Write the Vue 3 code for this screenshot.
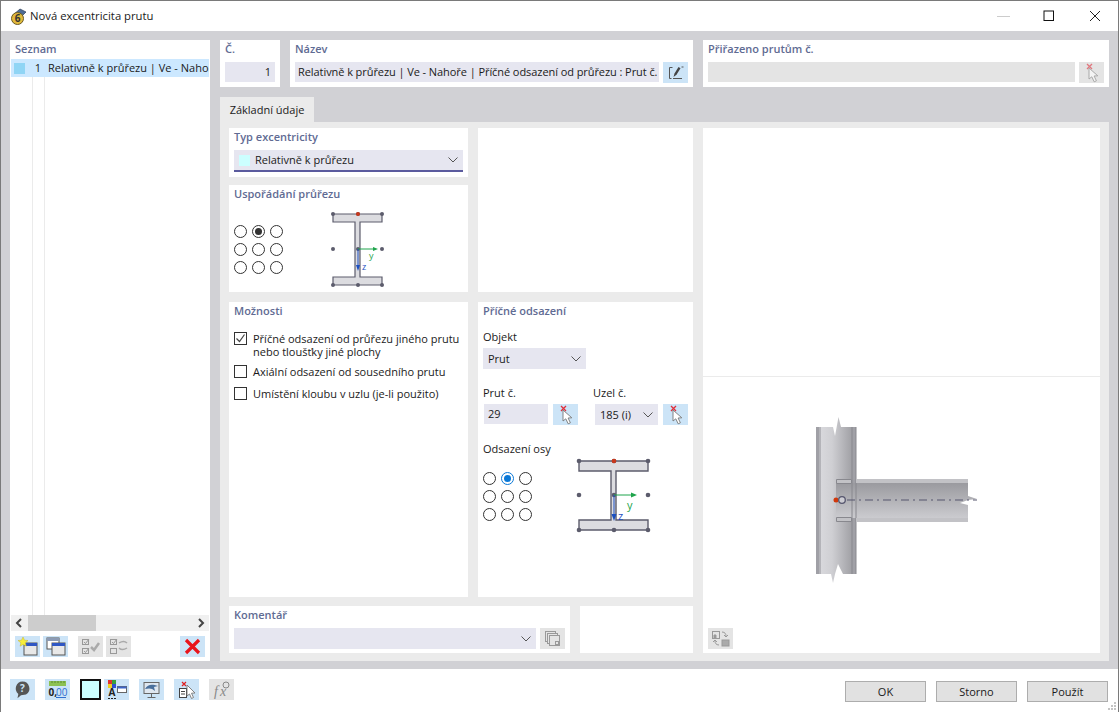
<script setup>
const radios = [0, 1, 2, 3, 4, 5, 6, 7, 8]
const smallDots = [[5, 4], [30, 4], [54, 4], [5, 39], [30, 39], [54, 39], [5, 75], [30, 75], [54, 75]]
const largeDots = [[4, 4], [39, 4], [73, 4], [4, 38], [39, 38], [73, 38], [4, 73], [39, 73], [73, 73]]
const gripDots = [[8, 2], [5, 5], [8, 5], [2, 8], [5, 8], [8, 8]]
</script>

<template>
  <div class="window">
    <svg class="defs" width="0" height="0">
      <defs>
        <symbol id="pick" viewBox="0 0 25 21">
          <path d="M8 2l5 5M13 2L8 7" stroke="currentColor" stroke-width="1.300" fill="none" class="pick-x" />
          <path d="M10 6v11l2.800-2.200 2.400 5 2.200-1-2.300-4.800 3.700-.2z" fill="#fff" stroke="#777" stroke-width=".9" />
        </symbol>
      </defs>
    </svg>

    <header class="titlebar">
      <svg class="app-icon" width="20" height="20" viewBox="0 0 20 20">
        <path d="M5 9l7-6 6 3-6 6z" fill="#4d6c96" stroke="#2c3c58" stroke-width=".7" />
        <circle cx="9.500" cy="12.500" r="6" fill="#e2b93b" stroke="#6a5a24" />
        <text x="9.500" y="16" text-anchor="middle" class="app-six">6</text>
      </svg>
      <span class="title">Nová excentricita prutu</span>
      <div class="win-controls">
        <svg width="14" height="14" viewBox="0 0 14 14"><path d="M1 7.500h13" stroke="#ccc" fill="none" /></svg>
        <svg width="14" height="14" viewBox="0 0 14 14"><rect x="2" y="2" width="9.500" height="9.500" fill="none" stroke="#111" /></svg>
        <svg width="14" height="14" viewBox="0 0 14 14"><path d="M2 2l10 10M12 2L2 12" stroke="#222" fill="none" /></svg>
      </div>
    </header>

    <main class="body">
      <aside class="sidebar">
        <h3 class="heading">Seznam</h3>
        <div class="list">
          <div class="row">
            <span class="row-swatch"></span>
            <span class="row-num">1</span>
            <span class="row-text">Relativně k průřezu | Ve - Nahoře</span>
          </div>
        </div>
        <div class="scrollbar">
          <svg width="17" height="16" viewBox="0 0 17 16"><path d="M10 4L6 8l4 4" fill="none" stroke="#444" stroke-width="2" /></svg>
          <div class="track"><div class="thumb"></div></div>
          <svg width="17" height="16" viewBox="0 0 17 16"><path d="M7 4l4 4-4 4" fill="none" stroke="#444" stroke-width="2" /></svg>
        </div>
        <div class="side-tools">
          <button class="btn-icon blue">
            <svg width="25" height="21" viewBox="0 0 25 21">
              <rect x="9" y="7" width="13" height="12" fill="#e8e8e8" stroke="#555" />
              <rect x="9" y="7" width="13" height="3" fill="#2f57c4" />
              <path d="M8 1l1.500 3.200 3.500.3-2.600 2.300.8 3.400L8 8.400l-2.900 1.800.8-3.400L3 4.500l3.500-.3z" fill="#f7ee3a" stroke="#c9b52a" stroke-width=".5" />
            </svg>
          </button>
          <button class="btn-icon blue">
            <svg width="25" height="21" viewBox="0 0 25 21">
              <rect x="4" y="2" width="12" height="11" fill="#fff" stroke="#555" />
              <rect x="4" y="2" width="12" height="3" fill="#8c9bb5" />
              <rect x="9" y="7" width="13" height="12" fill="#e8e8e8" stroke="#555" />
              <rect x="9" y="7" width="13" height="3" fill="#2f57c4" />
            </svg>
          </button>
          <button class="btn-icon grey gap-left">
            <svg width="25" height="21" viewBox="0 0 25 21" fill="none" stroke="#999">
              <rect x="4.500" y="3.500" width="6" height="5" /><rect x="4.500" y="12.500" width="6" height="5" />
              <path d="M6 6l1.500 1.500L11 3M6 15l1.500 1.500L11 12" />
              <path d="M13 11l3 3 5-7" stroke-width="2.500" stroke="#aaa" />
            </svg>
          </button>
          <button class="btn-icon grey">
            <svg width="25" height="21" viewBox="0 0 25 21" fill="none" stroke="#999">
              <rect x="4.500" y="3.500" width="6" height="5" /><rect x="4.500" y="12.500" width="6" height="5" />
              <path d="M6 6l1.500 1.500L11 3" />
              <path d="M13 7c3-2 6-2 8 0M21 12c-3 2-6 2-8 0" stroke-width="1.500" stroke="#aaa" />
            </svg>
          </button>
          <button class="btn-icon blue push-right">
            <svg width="25" height="21" viewBox="0 0 25 21"><path d="M6 4l13 13M19 4L6 17" stroke="#e8141c" stroke-width="3.200" fill="none" /></svg>
          </button>
        </div>
      </aside>

      <section class="content">
        <div class="top-row">
          <div class="card card-no">
            <h3 class="heading">Č.</h3>
            <div class="input right">1</div>
          </div>
          <div class="card card-name">
            <h3 class="heading">Název</h3>
            <div class="field-row">
              <div class="input grow clip name-input">Relativně k průřezu | Ve - Nahoře | Příčné odsazení od průřezu : Prut č.</div>
              <button class="btn-icon blue">
                <svg width="25" height="21" viewBox="0 0 25 21" fill="none" stroke="#555">
                  <path d="M9.500 5.500H6.500v11h2M10 16.500h9" />
                  <path d="M10.500 15l1-3.500 4-6.500 2 1.200-4 6.500z" fill="#444" stroke="none" />
                  <path d="M18.500 5h2" />
                </svg>
              </button>
            </div>
          </div>
          <div class="card card-assigned">
            <h3 class="heading">Přiřazeno prutům č.</h3>
            <div class="field-row">
              <div class="input grow disabled"></div>
              <button class="btn-icon grey off-pick"><svg width="25" height="21"><use href="#pick" /></svg></button>
            </div>
          </div>
        </div>

        <div class="tabs"><div class="tab">Základní údaje</div></div>

        <div class="tab-body">
          <div class="form-area">
            <div class="form-top">
              <div class="col">
                <div class="panel panel-type">
                  <h3 class="heading">Typ excentricity</h3>
                  <div class="select underlined">
                    <span class="type-swatch"></span>
                    <span class="grow">Relativně k průřezu</span>
                    <svg class="chev" width="10" height="6" viewBox="0 0 10 6"><path d="M.5.500L5 5 9.500.500" fill="none" stroke="#555" /></svg>
                  </div>
                </div>
                <div class="panel panel-arrange">
                  <h3 class="heading">Uspořádání průřezu</h3>
                  <div class="arrange">
                    <div class="radios">
                      <span v-for="r in radios" :key="r" class="radio" :class="{ 'on-dark': r === 1 }"></span>
                    </div>
                    <svg class="section-small" width="60" height="80" viewBox="0 0 60 80">
                      <path d="M5 4h49v8H32v55h22v8H5v-8h22V12H5z" fill="#dcdce0" stroke="#5c5c6c" stroke-width="1.200" />
                      <circle v-for="(d, i) in smallDots" :key="i" :cx="d[0]" :cy="d[1]" r="2" fill="#5c5c6c" />
                      <circle cx="30" cy="4" r="2" fill="#c8381c" />
                      <path d="M30 39h16" stroke="#1fa44c" />
                      <path d="M50 39l-5-2v4z" fill="#1fa44c" />
                      <path d="M30 39v18" stroke="#1c4fc0" />
                      <path d="M30 61l-2-6h4z" fill="#1c4fc0" />
                      <text x="41" y="49" class="axis-y">y</text>
                      <text x="34" y="60" class="axis-z">z</text>
                    </svg>
                  </div>
                </div>
              </div>
              <div class="panel col-blank"></div>
            </div>

            <div class="form-mid">
              <div class="panel panel-options">
                <h3 class="heading">Možnosti</h3>
                <label class="check first">
                  <span class="box">
                    <svg width="11" height="11" viewBox="0 0 11 11"><path d="M1.500 5.500l3 3 5-7" fill="none" stroke="#444" stroke-width="1.200" /></svg>
                  </span>
                  <span>Příčné odsazení od průřezu jiného prutu<br />nebo tloušťky jiné plochy</span>
                </label>
                <label class="check"><span class="box"></span><span>Axiální odsazení od sousedního prutu</span></label>
                <label class="check"><span class="box"></span><span>Umístění kloubu v uzlu (je-li použito)</span></label>
              </div>
              <div class="panel panel-offset">
                <h3 class="heading">Příčné odsazení</h3>
                <div class="label label-object">Objekt</div>
                <div class="select object-select">
                  <span class="grow">Prut</span>
                  <svg class="chev" width="10" height="6" viewBox="0 0 10 6"><path d="M.5.500L5 5 9.500.500" fill="none" stroke="#555" /></svg>
                </div>
                <div class="pair">
                  <div class="pair-left">
                    <div class="label">Prut č.</div>
                    <div class="field-row tight">
                      <div class="input member-input">29</div>
                      <button class="btn-icon blue on-pick"><svg width="25" height="21"><use href="#pick" /></svg></button>
                    </div>
                  </div>
                  <div class="pair-right">
                    <div class="label">Uzel č.</div>
                    <div class="field-row tight">
                      <div class="select node-select">
                        <span class="grow">185 (i)</span>
                        <svg class="chev" width="10" height="6" viewBox="0 0 10 6"><path d="M.5.500L5 5 9.500.500" fill="none" stroke="#555" /></svg>
                      </div>
                      <button class="btn-icon blue on-pick"><svg width="25" height="21"><use href="#pick" /></svg></button>
                    </div>
                  </div>
                </div>
                <div class="label label-axis">Odsazení osy</div>
                <div class="axis-row">
                  <div class="radios">
                    <span v-for="r in radios" :key="r" class="radio" :class="{ 'on-blue': r === 1 }"></span>
                  </div>
                  <svg class="section-large" width="77" height="77" viewBox="0 0 77 77">
                    <path d="M4 4h69v10H41v49h32v10H4V63h32V14H4z" fill="#dcdce0" stroke="#5c5c6c" stroke-width="1.400" />
                    <circle v-for="(d, i) in largeDots" :key="i" :cx="d[0]" :cy="d[1]" r="2.300" fill="#5c5c6c" />
                    <circle cx="39" cy="4" r="2.300" fill="#c8381c" />
                    <path d="M39 38h19" stroke="#1fa44c" />
                    <path d="M62 38l-6-2.500v5z" fill="#1fa44c" />
                    <path d="M39 38v20" stroke="#1c4fc0" />
                    <path d="M39 64l-2.500-7h5z" fill="#1c4fc0" />
                    <text x="52" y="52" class="axis-y big">y</text>
                    <text x="43" y="63" class="axis-z big">z</text>
                  </svg>
                </div>
              </div>
            </div>

            <div class="form-bottom">
              <div class="panel panel-comment">
                <h3 class="heading">Komentář</h3>
                <div class="field-row">
                  <div class="select grow">
                    <span class="grow"></span>
                    <svg class="chev" width="10" height="6" viewBox="0 0 10 6"><path d="M.5.500L5 5 9.500.500" fill="none" stroke="#555" /></svg>
                  </div>
                  <button class="btn-icon grey">
                    <svg width="25" height="21" viewBox="0 0 25 21" fill="none" stroke="#999">
                      <rect x="5.500" y="3.500" width="10" height="10" /><rect x="7.500" y="5.500" width="10" height="10" fill="#e4e4e4" />
                      <rect x="9.500" y="7.500" width="10" height="10" fill="#e4e4e4" /><rect x="15.500" y="13.500" width="3" height="3" />
                    </svg>
                  </button>
                </div>
              </div>
              <div class="panel panel-spare"></div>
            </div>
          </div>

          <div class="preview">
            <div class="preview-top"></div>
            <div class="preview-bottom">
              <svg class="model" width="397" height="276" viewBox="703 377 397 276">
                <defs>
                  <linearGradient id="colShade" x1="0" x2="1" y1="0" y2="0">
                    <stop offset="0" stop-color="#dcdce0" />
                    <stop offset=".4" stop-color="#cfcfd3" />
                    <stop offset="1" stop-color="#97979c" />
                  </linearGradient>
                  <linearGradient id="beamShade" x1="0" x2="0" y1="0" y2="1">
                    <stop offset="0" stop-color="#9a9a9f" />
                    <stop offset="1" stop-color="#cbcbcf" />
                  </linearGradient>
                </defs>
                <path d="M816 427h17l2 9 3.500-19 2.500 10h15v147h-13l-5-10-3 10-2 9-2-9h-15z" fill="url(#colShade)" />
                <path d="M816 427h3v147h-3zM852 427h4v147h-4z" fill="#a0a0a6" />
                <path d="M820 427v147" stroke="#8f8f95" fill="none" />
                <path d="M836 483h132v13l9 3-9 1-8 3 8 2v13H836z" fill="url(#beamShade)" />
                <path d="M852 427v147M856 427v147" stroke="#88888e" fill="none" />
                <path d="M856 479h112v4H856zM856 518h112v4H856z" fill="#c2c2c6" />
                <path d="M836.500 479.500h15v4h-15zM836.500 517.500h15v4h-15z" fill="#c2c2c6" stroke="#88888e" />
                <path d="M847 500h130" stroke="#56566e" stroke-width="1.200" stroke-dasharray="8 4 2 4" fill="none" />
                <circle cx="836" cy="500" r="2.500" fill="#d0380c" />
                <circle cx="842" cy="500" r="3.300" fill="#ccccd2" stroke="#56566e" stroke-width="1.300" />
              </svg>
              <button class="btn-icon grey view-btn">
                <svg width="25" height="21" viewBox="0 0 25 21" fill="none" stroke="#999">
                  <rect x="4.500" y="3.500" width="7" height="7" /><path d="M6 10V7h2v3z" fill="#999" />
                  <path d="M14 4c3 0 4 2 4 4M16 7l2 2 2-2M11 17c-3 0-4-2-4-4M5 14l2-2 2 2" />
                  <rect x="14" y="12" width="7" height="6" fill="#aaa" />
                </svg>
              </button>
            </div>
          </div>
        </div>
      </section>
    </main>

    <footer class="footer">
      <div class="foot-icons">
        <button class="btn-icon blue">
          <svg width="25" height="21" viewBox="0 0 25 21">
            <path d="M12.500 2.500a7 7 0 0 1 3.500 13l-5 .8-3.500 3 .8-4.400a7 7 0 0 1 4.200-12.400z" fill="#555" />
            <text x="12.500" y="13" text-anchor="middle" class="help-mark">?</text>
          </svg>
        </button>
        <button class="btn-icon blue">
          <svg width="25" height="21" viewBox="0 0 25 21">
            <rect x="4" y="2" width="17" height="5" fill="#8cc152" />
            <path d="M7 2v2M10 2v2M13 2v2M16 2v2M19 2v2" stroke="#5c8a30" />
            <text x="3.500" y="17" class="num-black">0,</text>
            <text x="11" y="17" class="num-blue">00</text>
            <path d="M11 18.500h10" stroke="#2f6fd0" />
          </svg>
        </button>
        <span class="color-box"></span>
        <button class="btn-icon blue tight-left">
          <svg width="25" height="21" viewBox="0 0 25 21">
            <rect x="4" y="1" width="4" height="4" fill="#e03030" /><rect x="8" y="1" width="4" height="4" fill="#3aa03a" />
            <rect x="4" y="5" width="4" height="4" fill="#f0d020" /><rect x="8" y="5" width="4" height="4" fill="#3050d0" />
            <text x="8" y="17" text-anchor="middle" class="num-a">A</text>
            <path d="M4 19.500h8" stroke="#222" stroke-dasharray="2 1" />
            <rect x="13.500" y="7.500" width="9" height="6" fill="#fff" stroke="#666" />
            <rect x="13.500" y="7.500" width="9" height="2" fill="#3b64c8" />
          </svg>
        </button>
        <button class="btn-icon blue">
          <svg width="25" height="21" viewBox="0 0 25 21">
            <rect x="5" y="3.500" width="15" height="11" fill="#dfe7f0" stroke="#666" />
            <path d="M6 10c3-5 7-5 13-3l-4 1 1 4c-3-3-6-3-10-2z" fill="#4a6f9c" />
            <path d="M12.500 15v3M8.500 18.500h8" stroke="#666" />
          </svg>
        </button>
        <button class="btn-icon blue">
          <svg width="25" height="21" viewBox="0 0 25 21">
            <path d="M8 3l4 4M12 3L8 7" stroke="#e02020" stroke-width="1.200" fill="none" />
            <rect x="5.500" y="9.500" width="7" height="9" fill="#fff" stroke="#444" />
            <path d="M7 12.500h4M7 15h4" stroke="#444" />
            <path d="M13 6v11l2.500-2 2 4.500 2-1-2-4.300 3.500-.2z" fill="#fff" stroke="#777" stroke-width=".9" />
          </svg>
        </button>
        <button class="btn-icon grey">
          <svg width="25" height="21" viewBox="0 0 25 21">
            <text x="5" y="17" class="fx">f</text>
            <text x="11" y="17" class="fx">x</text>
            <circle cx="17" cy="6" r="3" fill="none" stroke="#888" />
          </svg>
        </button>
      </div>
      <div class="foot-buttons">
        <button class="btn">OK</button>
        <button class="btn">Storno</button>
        <button class="btn">Použít</button>
      </div>
      <svg class="grip" width="10" height="10" viewBox="0 0 10 10">
        <rect v-for="(d, i) in gripDots" :key="i" :x="d[0] - 1" :y="d[1] - 1" width="2" height="2" fill="#c4c4c4" />
      </svg>
    </footer>
  </div>
</template>

<style scoped>
.window {
  width: 1119px;
  height: 712px;
  box-sizing: border-box;
  border: 1px solid #7a7a7a;
  border-bottom: 0;
  display: flex;
  flex-direction: column;
  background: #fff;
  color: #1a1a1a;
  font: 11px/14px "Open Sans", "Noto Sans", sans-serif;
  overflow: hidden;
}
.defs { display: block; }
.pick-x { color: #e0303c; }
.off-pick .pick-x { color: #aaa; }
.off-pick svg { opacity: 0.6; }

.titlebar {
  height: 30px;
  display: flex;
  align-items: center;
  padding-left: 7px;
  flex: none;
}
.app-icon { margin-right: 2px; }
.app-six { font: bold 10px "Open Sans", sans-serif; fill: #333; }
.title { font-size: 11.3px; }
.win-controls {
  margin-left: auto;
  display: flex;
  gap: 32px;
  padding-right: 16px;
}

.body {
  flex: 1;
  min-height: 0;
  background: #d1d1d5;
  display: flex;
  gap: 10px;
  padding: 9px 9px 8px;
}
.heading {
  margin: 0;
  font-size: 11px;
  line-height: 14px;
  font-weight: 600;
  color: #5f6b93;
}

.sidebar {
  width: 200px;
  background: #fff;
  display: flex;
  flex-direction: column;
  flex: none;
}
.sidebar > .heading { padding: 2px 5px 3px; }
.list {
  flex: 1;
  margin: 0 1px;
  background:
    linear-gradient(#ebebeb, #ebebeb) 21px 0 / 1px 100% no-repeat,
    linear-gradient(#ebebeb, #ebebeb) 33px 0 / 1px 100% no-repeat;
}
.row {
  height: 18px;
  display: flex;
  align-items: center;
  background: #cce8ff;
  overflow: hidden;
}
.row-swatch {
  width: 11px;
  height: 11px;
  margin-left: 3px;
  background: #90d5f5;
  flex: none;
}
.row-num {
  width: 16px;
  text-align: right;
  flex: none;
}
.row-text {
  margin-left: 7px;
  white-space: nowrap;
}
.scrollbar {
  height: 16px;
  margin: 0 1px;
  background: #f0f0f0;
  display: flex;
  align-items: center;
  flex: none;
}
.track { flex: 1; height: 100%; }
.thumb { width: 68px; height: 100%; background: #cdcdcd; }
.side-tools {
  display: flex;
  gap: 3px;
  padding: 5px 5px 4px;
  flex: none;
}
.gap-left { margin-left: 7px; }
.push-right { margin-left: auto; }

.btn-icon {
  width: 25px;
  height: 21px;
  padding: 0;
  border: 0;
  flex: none;
  display: block;
}
.btn-icon svg { display: block; }
.blue { background: #cce4f7; }
.grey { background: #e4e4e4; }

.content {
  flex: 1;
  min-width: 0;
  display: flex;
  flex-direction: column;
}
.top-row {
  display: flex;
  gap: 10px;
  height: 47px;
  flex: none;
}
.card {
  background: #fff;
  padding: 2px 5px 0;
  box-sizing: border-box;
}
.card .heading { margin-bottom: 6px; }
.card-no { width: 60px; }
.card-name { width: 403px; }
.card-assigned { flex: 1; }
.input {
  height: 20px;
  line-height: 20px;
  background: #e6e6f0;
  padding: 0 4px;
  box-sizing: border-box;
}
.right { text-align: right; }
.disabled { background: #e4e4e4; }
.clip { overflow: hidden; white-space: nowrap; }
.name-input { padding-left: 3px; letter-spacing: -0.07px; }
.field-row {
  display: flex;
  gap: 4px;
  align-items: flex-start;
}
.field-row.tight { gap: 5px; }
.grow { flex: 1; min-width: 0; }

.tabs {
  height: 25px;
  margin-top: 10px;
  flex: none;
}
.tab {
  width: 94px;
  height: 25px;
  line-height: 26px;
  background: #ebebeb;
  text-align: center;
}
.tab-body {
  flex: 1;
  min-height: 0;
  background: #ebebeb;
  padding: 6px 9px 8px;
  display: flex;
  gap: 10px;
}
.form-area {
  width: 464px;
  display: flex;
  flex-direction: column;
  flex: none;
}
.form-top {
  height: 164px;
  display: flex;
  gap: 10px;
  flex: none;
}
.col {
  width: 239px;
  display: flex;
  flex-direction: column;
  gap: 8px;
  flex: none;
}
.panel {
  background: #fff;
  padding: 2px 5px 0;
  box-sizing: border-box;
}
.col-blank { flex: 1; }
.panel-type { height: 49px; }
.panel-type .heading { margin-bottom: 6px; }
.panel-arrange { flex: 1; }
.select {
  height: 21px;
  background: #e6e6f0;
  display: flex;
  align-items: center;
  padding: 0 5px;
  box-sizing: border-box;
}
.underlined {
  height: 22px;
  border-bottom: 2px solid #5b5b9e;
}
.type-swatch {
  width: 11px;
  height: 11px;
  margin-right: 5px;
  background: #ccffff;
  flex: none;
}
.chev { flex: none; }
.arrange {
  display: flex;
  align-items: flex-start;
  gap: 45px;
}
.radios {
  display: grid;
  grid-template-columns: repeat(3, 13px);
  grid-auto-rows: 13px;
  gap: 5px;
  flex: none;
  margin-top: 24px;
}
.radio {
  border: 1px solid #333;
  border-radius: 50%;
  box-sizing: border-box;
  background: #fff;
}
.on-dark, .on-blue { position: relative; }
.on-dark::after, .on-blue::after {
  content: "";
  position: absolute;
  inset: 2px;
  border-radius: 50%;
  background: #333;
}
.on-blue { border-color: #0a78d7; }
.on-blue::after { background: #0a78d7; }
.section-small { margin-top: 9px; }
.axis-y { font: 9px "Open Sans", sans-serif; fill: #1fa44c; }
.axis-z { font: 9px "Open Sans", sans-serif; fill: #1c4fc0; }
.axis-y.big, .axis-z.big { font-size: 11px; }

.form-mid {
  height: 295px;
  margin-top: 10px;
  display: flex;
  gap: 10px;
  flex: none;
}
.panel-options { width: 239px; flex: none; }
.panel-offset { flex: 1; }
.check {
  display: flex;
  gap: 6px;
  line-height: 13px;
  margin-bottom: 9px;
}
.check.first { margin-top: 14px; margin-bottom: 7px; }
.box {
  width: 13px;
  height: 13px;
  border: 1px solid #333;
  box-sizing: border-box;
  display: block;
  flex: none;
}
.box svg { display: block; }
.label { line-height: 14px; }
.label-object { margin-top: 12px; margin-bottom: 4px; }
.object-select { width: 103px; }
.pair {
  display: flex;
  margin-top: 17px;
}
.pair-left { width: 110px; flex: none; }
.pair-left .label, .pair-right .label { margin-bottom: 4px; }
.member-input {
  width: 65px;
  border-left: 1px solid #fff;
  flex: none;
}
.node-select { width: 63px; margin-left: 2px; flex: none; }
.label-axis { margin-top: 17px; }
.axis-row {
  display: flex;
  align-items: flex-start;
  gap: 43px;
}
.axis-row .radios { margin-top: 16px; }
.section-large { margin-top: 1px; }

.form-bottom {
  height: 47px;
  margin-top: 9px;
  display: flex;
  gap: 10px;
  flex: none;
}
.panel-comment { width: 341px; flex: none; }
.panel-comment .heading { margin-bottom: 6px; }
.field-row .select.grow { flex: 1; }
.panel-spare { flex: 1; }

.preview {
  flex: 1;
  min-width: 0;
  display: flex;
  flex-direction: column;
  gap: 1px;
  background: #ebebeb;
}
.preview-top { height: 248px; background: #fff; flex: none; }
.preview-bottom {
  flex: 1;
  background: #fff;
  position: relative;
}
.model { display: block; }
.view-btn {
  position: absolute;
  left: 5px;
  bottom: 4px;
}

.footer {
  height: 43px;
  box-sizing: border-box;
  flex: none;
  display: flex;
  align-items: flex-start;
  justify-content: space-between;
  padding: 10px 10px 0 9px;
  position: relative;
}
.grip {
  position: absolute;
  right: 1px;
  bottom: 1px;
}
.foot-icons {
  display: flex;
  gap: 10px;
}
.color-box {
  width: 21px;
  height: 21px;
  box-sizing: border-box;
  border: 2px solid #111;
  background: #ccffff;
  flex: none;
}
.tight-left { margin-left: -7px; }
.help-mark { font: bold 10px "Open Sans", sans-serif; fill: #cce4f7; }
.num-black { font: bold 10px "Open Sans", sans-serif; fill: #222; }
.num-blue { font: 10px "Open Sans", sans-serif; fill: #2f6fd0; }
.num-a { font: bold 10px "Open Sans", sans-serif; fill: #222; }
.fx { font: italic 14px "Liberation Serif", serif; fill: #888; }
.foot-buttons {
  display: flex;
  gap: 10px;
  margin-top: 2px;
}
.btn {
  width: 81px;
  height: 21px;
  padding: 0;
  border: 1px solid #adadad;
  background: #e1e1e1;
  color: #1a1a1a;
  font: 11px/18px "Open Sans", "Noto Sans", sans-serif;
}
</style>
